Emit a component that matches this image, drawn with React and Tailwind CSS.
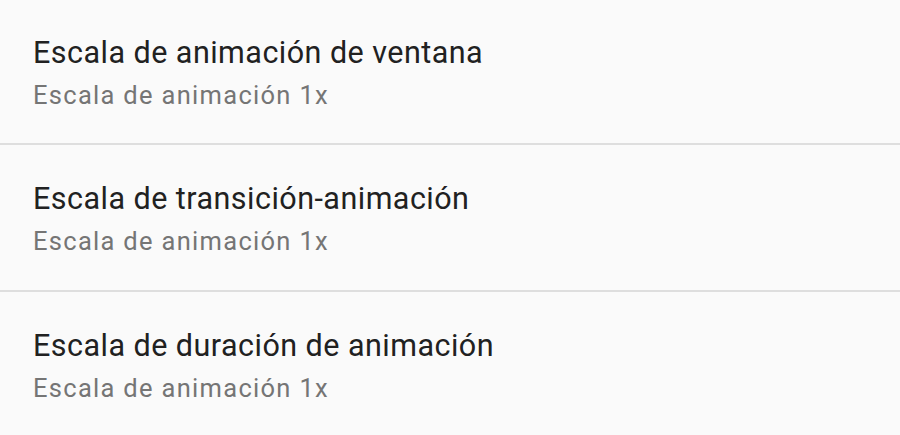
const ITEMS = [
  { title: 'Escala de animación de ventana', summary: 'Escala de animación 1x', pad: 'pt-[33px] h-[143px]' },
  { title: 'Escala de transición-animación', summary: 'Escala de animación 1x', pad: 'pt-[34px] h-[145px]' },
  { title: 'Escala de duración de animación', summary: 'Escala de animación 1x', pad: 'pt-[34px] h-[143px]' },
]

export default function App() {
  return (
    <div
      className="w-[900px] h-[435px] overflow-hidden bg-[#fafafa] flex flex-col"
      style={{ fontFamily: 'Roboto, "Noto Sans", sans-serif' }}
    >
      {ITEMS.map((item, i) => (
        <div key={item.title} className="flex flex-col shrink-0">
          {i > 0 && <div className="h-[2px] bg-[#dedede]" />}
          <div className={`px-[33px] flex flex-col ${item.pad}`}>
            <p className="text-[30.5px] leading-[40px] tracking-[0.47px] text-[#212121]">{item.title}</p>
            <p className="text-[25.5px] leading-[44px] tracking-[1.3px] text-[#757575]">{item.summary}</p>
          </div>
        </div>
      ))}
    </div>
  )
}
